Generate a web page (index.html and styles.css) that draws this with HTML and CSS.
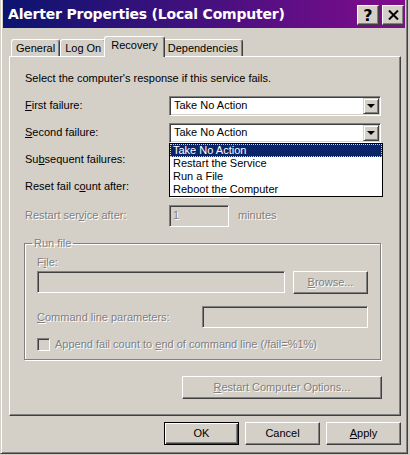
FILE: index.html
```html
<!DOCTYPE html>
<html lang="en">
<head>
  <meta charset="UTF-8">
  <title>Alerter Properties (Local Computer)</title>
  <link rel="stylesheet" href="styles.css">
</head>
<body>
  <div class="window">
    <div class="titlebar">
      <span class="title">Alerter Properties (Local Computer)</span>
      <div class="caption-buttons">
        <span class="cap-btn">?</span>
        <span class="cap-btn">
          <svg width="11" height="10" viewBox="0 0 11 10"><path d="M1 0.5 L10 9.5 M10 0.5 L1 9.5" stroke="#000" stroke-width="2"/></svg>
        </span>
      </div>
    </div>

    <div class="dialog">
      <div class="tabs">
        <span class="tab">General</span>
        <span class="tab">Log On</span>
        <span class="tab active">Recovery</span>
        <span class="tab">Dependencies</span>
      </div>

      <div class="panel">
        <p class="intro">Select the computer's response if this service fails.</p>

        <div class="row">
          <label><u>F</u>irst failure:</label>
          <div class="combo"><span class="combo-text">Take No Action</span><span class="drop-btn"></span></div>
        </div>

        <div class="row">
          <label><u>S</u>econd failure:</label>
          <div class="combo-wrap">
            <div class="combo"><span class="combo-text">Take No Action</span><span class="drop-btn"></span></div>
            <ul class="droplist">
              <li class="selected">Take No Action</li>
              <li>Restart the Service</li>
              <li>Run a File</li>
              <li>Reboot the Computer</li>
            </ul>
          </div>
        </div>

        <div class="row">
          <label>Su<u>b</u>sequent failures:</label>
          <div class="combo"><span class="combo-text"></span><span class="drop-btn"></span></div>
        </div>

        <div class="row">
          <label>Reset fail c<u>o</u>unt after:</label>
          <div class="field short"></div>
        </div>

        <div class="row restart disabled">
          <label>Restart ser<u>v</u>ice after:</label>
          <div class="field short">1</div>
          <span class="unit">minutes</span>
        </div>

        <fieldset class="group disabled">
          <legend>Run file</legend>
          <div class="caption">F<u>i</u>le:</div>
          <div class="file-row">
            <div class="field wide"></div>
            <span class="button"><u>B</u>rowse...</span>
          </div>
          <div class="cmd-row">
            <span><u>C</u>ommand line parameters:</span>
            <div class="field cmd"></div>
          </div>
          <div class="check-row">
            <span class="checkbox"></span>
            <span>Append fail count to <u>e</u>nd of command line (/fail=%1%)</span>
          </div>
        </fieldset>

        <div class="options">
          <span class="button disabled wide-btn"><u>R</u>estart Computer Options...</span>
        </div>
      </div>

      <div class="actions">
        <span class="button default">OK</span>
        <span class="button">Cancel</span>
        <span class="button"><u>A</u>pply</span>
      </div>
    </div>
  </div>
</body>
</html>
```

FILE: styles.css
```css
body {
  margin: 0;
  background: #d4d0c8;
  font-family: "Liberation Sans", Arial, sans-serif;
  font-size: 11px;
  line-height: 13px;
  color: #000;
}
.window {
  width: 408px;
  height: 454px;
  box-sizing: border-box;
  border: 1px solid;
  border-top: 0;
  border-color: #d4d0c8 #404040 #404040 #d4d0c8;
  box-shadow: inset 1px 0 #fff, inset -1px -1px #808080;
  padding: 0 2px 2px;
}
.titlebar {
  height: 28px;
  display: flex;
  align-items: center;
  justify-content: space-between;
  padding: 0 1px 0 5px;
  background: linear-gradient(to right, #0c1470, #4a1080 55%, #820c8c);
}
.title {
  color: #fff;
  font-family: "DejaVu Sans", sans-serif;
  font-weight: bold;
  font-size: 14px;
  letter-spacing: -0.2px;
}
.caption-buttons {
  display: flex;
  gap: 3px;
  margin-top: 2px;
}
.cap-btn {
  width: 22px;
  height: 20px;
  box-sizing: border-box;
  display: flex;
  align-items: center;
  justify-content: center;
  background: #d4d0c8;
  border: 1px solid;
  border-color: #fff #404040 #404040 #fff;
  box-shadow: inset -1px -1px #808080;
  font-family: "DejaVu Sans", sans-serif;
  font-weight: bold;
  font-size: 16px;
}
.dialog {
  padding: 8px 0 0 6px;
}
.tabs {
  display: flex;
  align-items: flex-end;
  height: 21px;
  padding-left: 2px;
  margin-bottom: -1px;
}
.tab {
  height: 17px;
  box-sizing: border-box;
  margin-bottom: 1px;
  padding: 1px 4px 0;
  border: 1px solid #fff;
  border-right-color: #404040;
  border-bottom: 0;
  border-radius: 3px 3px 0 0;
  box-shadow: inset -1px 0 #808080;
  line-height: 15px;
}
.tab.active {
  height: 21px;
  margin: 0 -2px;
  padding: 1px 6px 0;
  position: relative;
  z-index: 1;
  background: #d4d0c8;
}
.panel {
  width: 392px;
  height: 360px;
  box-sizing: border-box;
  border: 1px solid;
  border-color: #fff #404040 #404040 #fff;
  box-shadow: inset -1px -1px #808080;
  padding: 15px 18px 0 15px;
}
.intro {
  margin: 0 0 7px;
}
.row {
  display: flex;
  align-items: center;
  height: 27px;
}
.row label {
  width: 144px;
  flex: none;
}
.row.restart {
  margin-top: 2px;
}
.combo-wrap {
  position: relative;
}
.combo {
  width: 212px;
  height: 20px;
  box-sizing: border-box;
  display: flex;
  align-items: center;
  background: #fff;
  border: 1px solid;
  border-color: #808080 #fff #fff #808080;
  box-shadow: inset 1px 1px #404040, inset -1px -1px #d4d0c8;
  padding: 1px;
}
.combo-text {
  flex: 1;
  padding-left: 3px;
}
.drop-btn {
  width: 16px;
  height: 16px;
  box-sizing: border-box;
  display: flex;
  align-items: center;
  justify-content: center;
  background: #d4d0c8;
  border: 1px solid;
  border-color: #d4d0c8 #404040 #404040 #d4d0c8;
  box-shadow: inset 1px 1px #fff, inset -1px -1px #808080;
}
.drop-btn::after {
  content: "";
  border-left: 4px solid transparent;
  border-right: 4px solid transparent;
  border-top: 4px solid #000;
  margin-top: 1px;
}
.droplist {
  position: absolute;
  top: 20px;
  left: 0;
  z-index: 2;
  width: 214px;
  box-sizing: border-box;
  margin: 0;
  padding: 0;
  list-style: none;
  background: #fff;
  border: 1px solid #000;
}
.droplist li {
  height: 13px;
  padding-left: 3px;
}
.droplist li.selected {
  background: #0a246a;
  color: #fff;
  outline: 1px dotted #d4d0c8;
  outline-offset: -1px;
}
.field {
  height: 22px;
  box-sizing: border-box;
  background: #d4d0c8;
  border: 1px solid;
  border-color: #808080 #fff #fff #808080;
  box-shadow: inset 1px 1px #404040, inset -1px -1px #d4d0c8;
  padding: 3px 3px 0;
}
.field.short {
  width: 60px;
  background: #fff;
}
.unit {
  margin-left: 9px;
}
.disabled,
.disabled .field {
  color: #808080;
  text-shadow: 1px 1px 0 #fff;
}
.disabled .field.short {
  background: #d4d0c8;
}
.group {
  margin: 8px 0 0 -1px;
  width: 357px;
  box-sizing: border-box;
  padding: 0 12px 8px;
  border: 1px solid #808080;
  box-shadow: inset 1px 1px #fff, 1px 1px #fff;
}
.group legend {
  padding: 0 2px;
  margin-left: -5px;
}
.caption {
  margin-top: 6px;
}
.file-row {
  display: flex;
  gap: 8px;
  margin-top: 2px;
}
.field.wide {
  flex: 1;
}
.cmd-row {
  display: flex;
  align-items: center;
  justify-content: space-between;
  margin-top: 12px;
}
.field.cmd {
  width: 166px;
}
.check-row {
  display: flex;
  align-items: center;
  gap: 5px;
  margin-top: 10px;
}
.checkbox {
  width: 13px;
  height: 13px;
  box-sizing: border-box;
  border: 1px solid;
  border-color: #808080 #fff #fff #808080;
  box-shadow: inset 1px 1px #404040, inset -1px -1px #d4d0c8;
}
.button {
  width: 75px;
  height: 23px;
  box-sizing: border-box;
  display: flex;
  align-items: center;
  justify-content: center;
  border: 1px solid;
  border-color: #fff #404040 #404040 #fff;
  box-shadow: inset -1px -1px #808080;
}
.options {
  display: flex;
  justify-content: flex-end;
  margin-top: 16px;
}
.wide-btn {
  width: 200px;
}
.actions {
  display: flex;
  justify-content: flex-end;
  gap: 6px;
  width: 392px;
  margin-top: 6px;
}
.button.default {
  border-color: #000;
  box-shadow: inset 1px 1px #fff, inset -1px -1px #404040, inset -2px -2px #808080;
}
```
